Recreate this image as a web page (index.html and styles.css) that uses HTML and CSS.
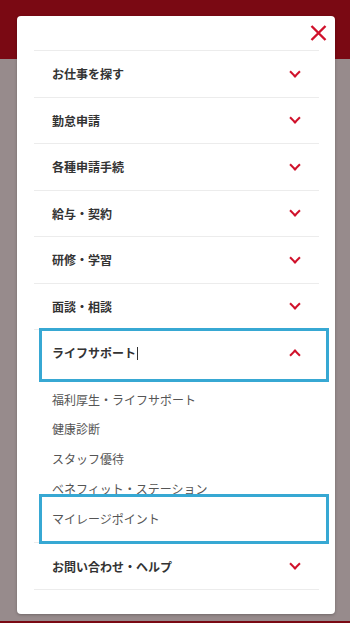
FILE: index.html
```html
<!DOCTYPE html>
<html lang="ja">
<head>
  <meta charset="UTF-8">
  <meta name="viewport" content="width=device-width, initial-scale=1.0">
  <title>メニュー</title>
  <link rel="stylesheet" href="styles.css">
</head>
<body>
  <div class="page">
    <header class="site-header"></header>
    <main class="site-main"></main>
    <footer class="site-footer"></footer>
  </div>

  <div class="modal">
    <div class="modal-top">
      <button class="close-btn" aria-label="閉じる">
        <svg width="17" height="16" viewBox="0 0 17 16">
          <path d="M1.5 1 L15.5 15 M15.5 1 L1.5 15" stroke="#d0112b" stroke-width="2.4" fill="none"/>
        </svg>
      </button>
    </div>

    <ul class="menu">
      <li class="menu-item">
        <button class="menu-toggle"><span>お仕事を探す</span><i class="chevron"></i></button>
      </li>
      <li class="menu-item">
        <button class="menu-toggle"><span>勤怠申請</span><i class="chevron"></i></button>
      </li>
      <li class="menu-item">
        <button class="menu-toggle"><span>各種申請手続</span><i class="chevron"></i></button>
      </li>
      <li class="menu-item">
        <button class="menu-toggle"><span>給与・契約</span><i class="chevron"></i></button>
      </li>
      <li class="menu-item">
        <button class="menu-toggle"><span>研修・学習</span><i class="chevron"></i></button>
      </li>
      <li class="menu-item">
        <button class="menu-toggle"><span>面談・相談</span><i class="chevron"></i></button>
      </li>
      <li class="menu-item open">
        <button class="menu-toggle is-focus"><span>ライフサポート<span class="caret"></span></span><i class="chevron up"></i></button>
        <ul class="sub-menu">
          <li><a class="sub-link" href="#">福利厚生・ライフサポート</a></li>
          <li><a class="sub-link" href="#">健康診断</a></li>
          <li><a class="sub-link" href="#">スタッフ優待</a></li>
          <li><a class="sub-link" href="#">ベネフィット・ステーション</a></li>
          <li><a class="sub-link is-focus" href="#">マイレージポイント</a></li>
        </ul>
      </li>
      <li class="menu-item">
        <button class="menu-toggle"><span>お問い合わせ・ヘルプ</span><i class="chevron"></i></button>
      </li>
    </ul>
  </div>
</body>
</html>
```

FILE: styles.css
```css
body {
  margin: 0;
  font-family: "Noto Sans CJK JP", "Noto Sans", sans-serif;
  background: #978b8c;
}
.page {
  height: 100vh;
  display: flex;
  flex-direction: column;
}
.site-header {
  height: 59px;
  background: #7a0913;
}
.site-main {
  flex: 1;
  background: #978b8c;
}
.site-footer {
  height: 2px;
  background: #7a0913;
}
.modal {
  position: absolute;
  top: 16px;
  left: 17px;
  width: 318px;
  height: 598px;
  box-sizing: border-box;
  padding: 0 16px 0 17px;
  background: #fff;
  border-radius: 4px;
  box-shadow: 0 1px 3px rgba(0, 0, 0, 0.25);
}
.modal-top {
  height: 34px;
  display: flex;
  justify-content: flex-end;
  align-items: center;
}
.close-btn {
  width: 17px;
  height: 16px;
  padding: 0;
  margin-right: -8px;
  border: none;
  background: none;
  display: flex;
}
.menu {
  list-style: none;
  margin: 0;
  padding: 0;
}
.menu-item {
  border-top: 1px solid #ececec;
}
.menu-item:last-child {
  border-bottom: 1px solid #ececec;
}
.menu-toggle {
  position: relative;
  display: flex;
  align-items: center;
  justify-content: space-between;
  box-sizing: border-box;
  width: 282px;
  height: 45.5px;
  margin-left: 9px;
  padding: 0 26px 0 9px;
  border: none;
  background: none;
  font-family: inherit;
  font-size: 12px;
  font-weight: bold;
  color: #333;
  text-align: left;
}
.caret {
  display: inline-block;
  width: 1px;
  height: 13px;
  margin-left: 1px;
  vertical-align: -2px;
  background: #333;
}
.chevron {
  width: 6px;
  height: 6px;
  margin-top: -4px;
  border-right: 2px solid #d0112b;
  border-bottom: 2px solid #d0112b;
  transform: rotate(45deg);
}
.chevron.up {
  margin-top: 4px;
  transform: rotate(-135deg);
}
.is-focus::after {
  content: "";
  position: absolute;
  top: -2px;
  bottom: -6px;
  left: -4px;
  right: -4px;
  border: 3px solid #37a8d3;
  pointer-events: none;
}
.sub-menu {
  list-style: none;
  margin: 0;
  padding: 9px 0;
}
.sub-link {
  position: relative;
  display: block;
  box-sizing: border-box;
  width: 282px;
  height: 29.8px;
  line-height: 29.8px;
  margin-left: 9px;
  padding-left: 9px;
  font-size: 12px;
  color: #555;
  text-decoration: none;
}
.sub-link.is-focus::after {
  top: -10px;
  bottom: -11px;
}
```
